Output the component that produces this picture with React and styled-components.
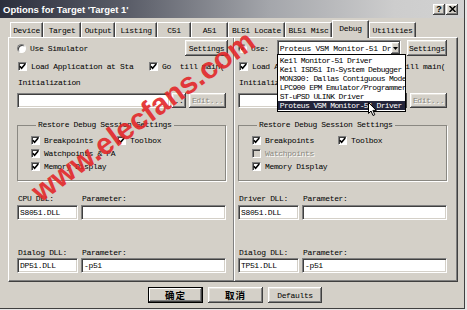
import React from 'react'
import styled, { createGlobalStyle, css } from 'styled-components'

const GlobalStyle = createGlobalStyle`
  html, body {
    margin: 0;
    padding: 0;
    background: #e6e6e6;
  }
`

const raised = css`
  box-shadow: inset -1px -1px #404040, inset 1px 1px #ffffff,
    inset -2px -2px #808080, inset 2px 2px #e6e3dc;
`

const Dialog = styled.div`
  position: relative;
  width: 465px;
  height: 309px;
  box-sizing: border-box;
  background: #d4d0c8;
  border-right: 1px solid #404040;
  border-bottom: 1px solid #404040;
  display: flex;
  flex-direction: column;
  overflow: hidden;
  font-family: 'Liberation Mono', 'DejaVu Sans Mono', monospace;
  font-size: 8px;
  letter-spacing: -0.35px;
  color: #000;
`

const TitleBar = styled.div`
  height: 18px;
  flex-shrink: 0;
  display: flex;
  align-items: center;
  gap: 1px;
  padding: 0 6px 0 3px;
  background: linear-gradient(90deg, #2c2f3d 0%, #5b5e69 28%, #a4a6ab 58%, #cdcdcd 85%, #d2d2d2 100%);
`

const Title = styled.span`
  flex: 1;
  font-family: 'Liberation Sans', Arial, sans-serif;
  font-weight: bold;
  font-size: 9.5px;
  letter-spacing: 0;
  color: #ffffff;
`

const CaptionButton = styled.div`
  width: 12px;
  height: 11px;
  background: #d4d0c8;
  ${raised};
  display: flex;
  align-items: center;
  justify-content: center;
  font-family: 'Liberation Sans', Arial, sans-serif;
  font-weight: bold;
  font-size: 9px;
  letter-spacing: 0;
`

const Body = styled.div`
  padding: 2px 0 0 8px;
  display: flex;
  flex-direction: column;
`

const TabRow = styled.div`
  height: 17px;
  display: flex;
  align-items: flex-end;
  padding-left: 2px;
`

const Tab = styled.div`
  position: relative;
  box-sizing: border-box;
  width: ${p => p.$w}px;
  height: ${p => (p.$active ? 18 : 15)}px;
  margin-bottom: ${p => (p.$active ? -1 : 0)}px;
  z-index: ${p => (p.$active ? 1 : 0)};
  background: #d4d0c8;
  border-top: 1px solid #ffffff;
  border-left: 1px solid #ffffff;
  border-right: 1px solid #404040;
  box-shadow: inset -1px 0 #808080;
  display: flex;
  justify-content: center;
  padding-top: 3px;
  white-space: nowrap;
`

const Panel = styled.div`
  width: 450px;
  height: 245px;
  box-sizing: border-box;
  border-top: 1px solid #ffffff;
  border-left: 1px solid #ffffff;
  border-right: 1px solid #404040;
  border-bottom: 1px solid #404040;
  box-shadow: inset -1px -1px #808080;
  display: grid;
  grid-template-columns: 224px 224px;
`

const Column = styled.div`
  position: relative;
  display: flex;
  flex-direction: column;
  padding-left: ${p => p.$pad}px;
  ${p =>
    p.$divider &&
    css`
      border-left: 1px solid #808080;
      box-shadow: inset 1px 0 #ffffff;
    `}
`

const Row = styled.div`
  display: flex;
  align-items: center;
  height: ${p => p.$h}px;
  margin-top: ${p => p.$mt}px;
  width: 209px;
`

const CheckGrid = styled.div`
  display: grid;
  grid-template-columns: 131px 78px;
  align-items: center;
  height: 12px;
  margin-top: 4px;
  padding-left: 1px;
`

const Label = styled.div`
  height: 10px;
  line-height: 10px;
  margin-top: ${p => p.$mt}px;
  padding-left: 1px;
  white-space: nowrap;
`

const DllGrid = styled.div`
  display: grid;
  grid-template-columns: 61px 145px;
  column-gap: 3px;
  align-items: center;
  height: ${p => p.$h}px;
  margin-top: ${p => p.$mt}px;
  & > span {
    padding-left: 1px;
  }
`

const Field = styled.div`
  box-sizing: border-box;
  height: 15px;
  width: ${p => (p.$w ? `${p.$w}px` : 'auto')};
  background: #ffffff;
  border: 1px solid;
  border-color: #808080 #ffffff #ffffff #808080;
  box-shadow: inset 1px 1px #404040, inset -1px -1px #d4d0c8;
  padding: 0 2px;
  display: flex;
  align-items: center;
  white-space: nowrap;
  overflow: hidden;
`

const Button = styled.div`
  box-sizing: border-box;
  flex-shrink: 0;
  width: ${p => p.$w}px;
  height: ${p => p.$h || 15}px;
  margin-left: ${p => (p.$ml === 'auto' ? 'auto' : `${p.$ml || 0}px`)};
  margin-right: ${p => p.$mr || 0}px;
  background: #d4d0c8;
  ${raised};
  display: flex;
  align-items: center;
  justify-content: center;
  white-space: nowrap;
  color: ${p => (p.$disabled ? '#8a8880' : '#000')};
  text-shadow: ${p => (p.$disabled ? '1px 1px #ffffff' : 'none')};
  ${p =>
    p.$default &&
    css`
      border: 1px solid #000;
      box-shadow: inset -1px -1px #404040, inset 1px 1px #ffffff, inset -2px -2px #808080;
    `}
`

const CjkButtonText = styled.span`
  font-family: 'Noto Sans CJK SC', sans-serif;
  font-size: 9.5px;
  font-weight: bold;
  letter-spacing: 1px;
`

const CheckItem = styled.div`
  display: flex;
  align-items: center;
  gap: 4px;
  white-space: pre;
  overflow: hidden;
  color: ${p => (p.$disabled ? '#8a8880' : '#000')};
  text-shadow: ${p => (p.$disabled ? '1px 1px #ffffff' : 'none')};
`

const Box = styled.span`
  flex-shrink: 0;
  box-sizing: border-box;
  width: 9px;
  height: 9px;
  background: ${p => (p.$disabled ? '#d4d0c8' : '#ffffff')};
  border: 1px solid;
  border-color: #808080 #ffffff #ffffff #808080;
  box-shadow: inset 1px 1px #404040;
  display: flex;
  align-items: center;
  justify-content: center;
`

const RadioDot = styled.span`
  flex-shrink: 0;
  box-sizing: border-box;
  width: 9px;
  height: 9px;
  border-radius: 50%;
  background: #ffffff;
  border: 1px solid;
  border-color: #808080 #ffffff #ffffff #808080;
  box-shadow: inset 1px 1px #404040;
  display: flex;
  align-items: center;
  justify-content: center;
  &::after {
    content: '';
    width: 3px;
    height: 3px;
    border-radius: 50%;
    background: ${p => (p.$on ? '#000' : 'transparent')};
  }
`

const Group = styled.fieldset`
  box-sizing: border-box;
  width: 209px;
  height: 61px;
  margin: 12px 0 0 0;
  padding: 4px 0 0 13px;
  border: 1px solid #8a8882;
  box-shadow: 1px 1px 0 #ffffff;
  & > legend {
    padding: 0 2px;
    margin-left: 5px;
    height: 10px;
    line-height: 10px;
  }
`

const GroupGrid = styled.div`
  display: grid;
  grid-template-columns: 86px 100px;
  grid-auto-rows: 13px;
  align-items: center;
`

const SelectWrap = styled.div`
  position: relative;
  margin-left: 8px;
`

const Select = styled(Field)`
  width: 124px;
  height: 16px;
  padding: 0 0 0 2px;
  justify-content: space-between;
`

const ArrowBtn = styled.span`
  width: 11px;
  height: 12px;
  background: #d4d0c8;
  ${raised};
  display: flex;
  align-items: center;
  justify-content: center;
`

const DropList = styled.div`
  position: absolute;
  z-index: 3;
  left: 0;
  top: 14px;
  width: 129px;
  box-sizing: border-box;
  background: #ffffff;
  border: 1px solid #000;
  padding: 1px 0;
  letter-spacing: -0.6px;
`

const DropItem = styled.div`
  height: 9px;
  line-height: 9px;
  padding-left: 2px;
  white-space: nowrap;
  overflow: hidden;
  background: ${p => (p.$sel ? '#22243a' : 'transparent')};
  color: ${p => (p.$sel ? '#ffffff' : '#000')};
`

const Footer = styled.div`
  display: flex;
  gap: 5px;
  margin-top: 5px;
  padding-left: 140px;
`

const Cursor = styled.svg`
  position: absolute;
  left: 368px;
  top: 102px;
  z-index: 5;
`

const Watermark = styled.div`
  position: absolute;
  left: 143px;
  top: 116px;
  z-index: 6;
  transform: translate(-50%, -50%) rotate(-36deg);
  font-family: 'Liberation Sans', Arial, sans-serif;
  font-weight: bold;
  font-size: 30px;
  letter-spacing: 0;
  color: #e3282a;
  opacity: 0.9;
  white-space: nowrap;
  pointer-events: none;
`

const Tick = () => (
  <svg width="7" height="7" viewBox="0 0 7 7">
    <path d="M0.8 3.2 L2.6 5.2 L6.2 1" stroke="#000" strokeWidth="1.6" fill="none" />
  </svg>
)

const Check = ({ on, disabled, children }) => (
  <CheckItem $disabled={disabled}>
    <Box $disabled={disabled}>{on && <Tick />}</Box>
    <span>{children}</span>
  </CheckItem>
)

const tabs = [
  ['Device', 33],
  ['Target', 38],
  ['Output', 34],
  ['Listing', 42],
  ['C51', 34],
  ['A51', 37],
  ['BL51 Locate', 57],
  ['BL51 Misc', 47],
  ['Debug', 37],
  ['Utilities', 47],
]

const drivers = [
  'Keil Monitor-51 Driver',
  'Keil ISD51 In-System Debugger',
  'MON390: Dallas Contiguous Mode',
  'LPC900 EPM Emulator/Programmer',
  'ST-uPSD ULINK Driver',
  'Proteus VSM Monitor-51 Driver',
]

const SidePanel = ({ top, watchDisabled, dllLabel, dll, dialogDll, divider, pad }) => (
  <Column $pad={pad} $divider={divider}>
    <Row $h={16} $mt={2}>{top}</Row>
    <CheckGrid>
      <Check on>Load Application at Sta</Check>
      <Check on>{'Go  till main('}</Check>
    </CheckGrid>
    <Label $mt={6}>Initialization</Label>
    <Row $h={15} $mt={5}>
      <Field $w={153} />
      <Button $w={14} $ml={2}>..</Button>
      <Button $w={37} $ml={3} $disabled>Edit...</Button>
    </Row>
    <Group>
      <legend>Restore Debug Session Settings</legend>
      <GroupGrid>
        <Check on>Breakpoints</Check>
        <Check on>Toolbox</Check>
        {watchDisabled ? (
          <Check disabled>Watchpoints</Check>
        ) : (
          <Check on>Watchpoints &amp; PA</Check>
        )}
        <span />
        <Check on>Memory Display</Check>
      </GroupGrid>
    </Group>
    <DllGrid $h={10} $mt={12}>
      <span>{dllLabel}</span>
      <span>Parameter:</span>
    </DllGrid>
    <DllGrid $h={15} $mt={2}>
      <Field>{dll}</Field>
      <Field />
    </DllGrid>
    <DllGrid $h={10} $mt={27}>
      <span>Dialog DLL:</span>
      <span>Parameter:</span>
    </DllGrid>
    <DllGrid $h={15} $mt={1}>
      <Field>{dialogDll}</Field>
      <Field>-p51</Field>
    </DllGrid>
  </Column>
)

const App = () => {
  return (
    <Dialog>
      <GlobalStyle />
      <TitleBar>
        <Title>Options for Target 'Target 1'</Title>
        <CaptionButton>?</CaptionButton>
        <CaptionButton>
          <svg width="7" height="6" viewBox="0 0 7 6">
            <path d="M0.5 0 L6.5 6 M6.5 0 L0.5 6" stroke="#000" strokeWidth="1.5" />
          </svg>
        </CaptionButton>
      </TitleBar>
      <Body>
        <TabRow>
          {tabs.map(([name, w]) => (
            <Tab key={name} $w={w} $active={name === 'Debug'}>
              {name}
            </Tab>
          ))}
        </TabRow>
        <Panel>
          <SidePanel
            pad={8}
            dllLabel="CPU DLL:"
            dll="S8051.DLL"
            dialogDll="DP51.DLL"
            top={
              <>
                <CheckItem>
                  <RadioDot />
                  <span>Use Simulator</span>
                </CheckItem>
                <Button $w={43} $h={16} $ml="auto" $mr={-2}>
                  Settings
                </Button>
              </>
            }
          />
          <SidePanel
            pad={4}
            divider
            watchDisabled
            dllLabel="Driver DLL:"
            dll="S8051.DLL"
            dialogDll="TP51.DLL"
            top={
              <>
                <CheckItem>
                  <RadioDot $on />
                  <span>Use:</span>
                </CheckItem>
                <SelectWrap>
                  <Select>
                    <span>Proteus VSM Monitor-51 Dr</span>
                    <ArrowBtn>
                      <svg width="5" height="3" viewBox="0 0 5 3">
                        <path d="M0 0 L5 0 L2.5 3 Z" fill="#000" />
                      </svg>
                    </ArrowBtn>
                  </Select>
                  <DropList>
                    {drivers.map(d => (
                      <DropItem key={d} $sel={d.startsWith('Proteus')}>
                        {d}
                      </DropItem>
                    ))}
                  </DropList>
                </SelectWrap>
                <Button $w={40} $h={16} $ml={6}>Settings</Button>
              </>
            }
          />
        </Panel>
        <Footer>
          <Button $w={55} $h={16} $default>
            <CjkButtonText>确定</CjkButtonText>
          </Button>
          <Button $w={55} $h={16}>
            <CjkButtonText>取消</CjkButtonText>
          </Button>
          <Button $w={54} $h={16}>Defaults</Button>
        </Footer>
      </Body>
      <Cursor width="10" height="15" viewBox="0 0 10 15">
        <path d="M0.5 0.5 L0.5 11.5 L3 9 L5 13.5 L6.8 12.7 L4.9 8.4 L8.3 8.4 Z" fill="#fff" stroke="#000" strokeWidth="1" />
      </Cursor>
      <Watermark>www.elecfans.com</Watermark>
    </Dialog>
  )
}

export default App
